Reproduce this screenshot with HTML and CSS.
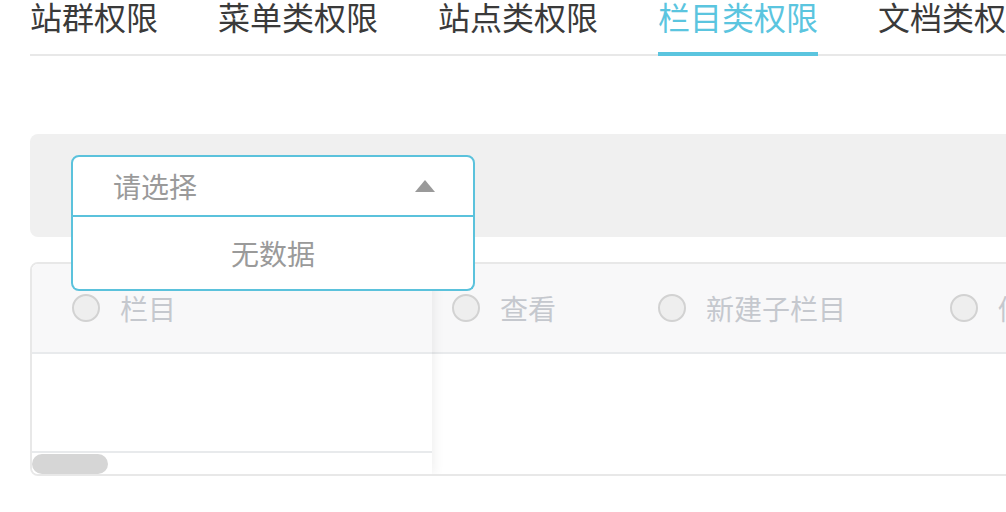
FILE: index.html
```html
<!DOCTYPE html>
<html lang="zh-CN">
<head>
<meta charset="utf-8">
<title>栏目类权限</title>
<link rel="stylesheet" href="styles.css">
</head>
<body>
<div class="page">
  <nav class="tabs">
    <div class="tab">站群权限</div>
    <div class="tab">菜单类权限</div>
    <div class="tab">站点类权限</div>
    <div class="tab active">栏目类权限</div>
    <div class="tab">文档类权限</div>
  </nav>

  <div class="filter-bar">
    <div class="select open">
      <div class="select-box">
        <span class="placeholder">请选择</span>
        <span class="arrow"></span>
      </div>
      <div class="dropdown">无数据</div>
    </div>
  </div>

  <div class="table">
    <div class="fixed-col">
      <div class="th first"><span class="radio"></span><span class="label">栏目</span></div>
      <div class="td-body"></div>
      <div class="scroll-row"><span class="thumb"></span></div>
    </div>
    <div class="main-cols">
      <div class="head-row">
        <div class="th c1"><span class="radio"></span><span class="label">查看</span></div>
        <div class="th c2"><span class="radio"></span><span class="label">新建子栏目</span></div>
        <div class="th c3"><span class="radio"></span><span class="label">修改栏目</span></div>
      </div>
      <div class="body-row"></div>
    </div>
  </div>
</div>
</body>
</html>
```

FILE: styles.css
```css
html, body {
  margin: 0;
  padding: 0;
  overflow: hidden;
  background: #fff;
}
body {
  font-family: "Noto Sans CJK SC", "Noto Sans", sans-serif;
  color: #333;
}
.page {
  width: 1200px;
  padding-left: 30px;
}

/* tabs */
.tabs {
  display: flex;
  gap: 60px;
  border-bottom: 2px solid #e8e8e8;
}
.tab {
  font-size: 32px;
  line-height: 32px;
  padding-bottom: 20px;
  border-bottom: 4px solid transparent;
  margin-bottom: -2px;
  color: #3a3a3a;
  white-space: nowrap;
}
.tab.active {
  color: #5bc5df;
  border-bottom-color: #5bc5df;
}

/* filter bar */
.filter-bar {
  margin-top: 78px;
  background: #f0f0f0;
  border-radius: 8px;
  padding: 21px 0 20px 41px;
}
.select {
  position: relative;
  width: 404px;
}
.select-box {
  height: 58px;
  border: 2px solid #5bc2dc;
  border-radius: 8px;
  background: #fff;
  display: flex;
  align-items: center;
  justify-content: space-between;
  padding: 0 38px 0 40px;
}
.select.open .select-box {
  border-bottom-left-radius: 0;
  border-bottom-right-radius: 0;
}
.placeholder {
  font-size: 28px;
  color: #9a9a9a;
}
.arrow {
  width: 0;
  height: 0;
  border-left: 10px solid transparent;
  border-right: 10px solid transparent;
  border-bottom: 12px solid #9a9a9a;
}
.dropdown {
  position: absolute;
  top: 100%;
  left: 0;
  right: 0;
  box-sizing: border-box;
  height: 74px;
  border: 2px solid #5bc2dc;
  border-top: none;
  border-radius: 0 0 8px 8px;
  background: #fff;
  z-index: 5;
  display: flex;
  align-items: center;
  justify-content: center;
  font-size: 28px;
  color: #9a9a9a;
}

/* table */
.table {
  margin-top: 25px;
  border: 2px solid #e8e8e8;
  border-radius: 8px;
  display: flex;
  overflow: hidden;
  height: 210px;
}
.fixed-col {
  width: 400px;
  flex: none;
  position: relative;
  z-index: 1;
  background: #fff;
  box-shadow: 3px 0 10px rgba(0, 0, 0, 0.06);
  display: flex;
  flex-direction: column;
}
.th {
  height: 88px;
  display: flex;
  align-items: center;
  box-sizing: border-box;
}
.fixed-col .th {
  background: #f8f8f9;
  border-bottom: 2px solid #e8eaec;
  height: 90px;
  padding-left: 40px;
}
.td-body {
  height: 97px;
  border-bottom: 2px solid #e8eaec;
}
.scroll-row {
  flex: 1;
  display: flex;
  align-items: center;
}
.thumb {
  display: block;
  width: 76px;
  height: 20px;
  border-radius: 10px;
  background: #d6d6d6;
}
.radio {
  width: 24px;
  height: 24px;
  border: 2px solid #d2d2d2;
  border-radius: 50%;
  background: #eeeeee;
  flex: none;
}
.label {
  margin-left: 20px;
  font-size: 28px;
  color: #c5c8ce;
  white-space: nowrap;
}
.main-cols {
  flex: 1;
  display: flex;
  flex-direction: column;
}
.head-row {
  display: flex;
  height: 90px;
  box-sizing: border-box;
  background: #f8f8f9;
  border-bottom: 2px solid #e8eaec;
}
.head-row .th {
  padding-left: 20px;
}
.c1 { width: 206px; }
.c2 { width: 292px; }
.c3 { width: 300px; }
.body-row {
  flex: 1;
}
```
